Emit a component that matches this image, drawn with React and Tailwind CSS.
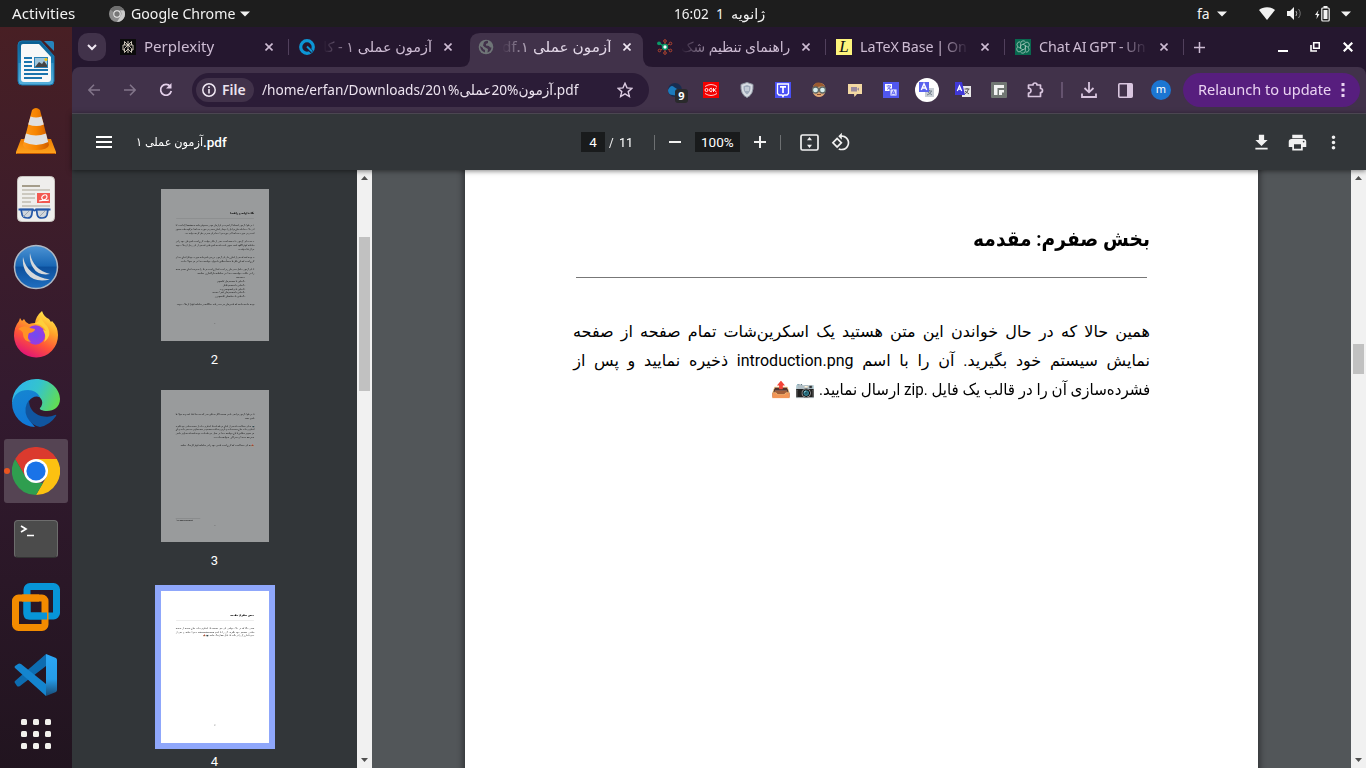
import React, { useLayoutEffect, useRef, useState } from "react";

/* Scales one line of text horizontally so that it fills its box. */
function Fit({ className = "", dir = "ltr", children }) {
  const box = useRef(null);
  const text = useRef(null);
  const [scale, setScale] = useState(1);
  useLayoutEffect(() => {
    const w = text.current.offsetWidth;
    if (w) setScale(box.current.clientWidth / w);
  }, []);
  return (
    <div ref={box} dir={dir} className={`shrink-0 whitespace-nowrap ${className}`}>
      <span
        ref={text}
        className={`inline-block ${dir === "rtl" ? "origin-right" : "origin-left"}`}
        style={{ transform: `scaleX(${scale})` }}
      >
        {children}
      </span>
    </div>
  );
}

const UI = "font-['Noto_Sans','DejaVu_Sans',sans-serif]";

function Caret() {
  return (
    <svg width="10" height="6" viewBox="0 0 10 6" className="shrink-0">
      <path d="M0 .5h10L5 5.5z" fill="#f2f2f2" />
    </svg>
  );
}

function TopBar() {
  return (
    <div className="flex h-[27px] shrink-0 items-center bg-[#1d1d1d] text-[14px] leading-[26px] text-[#f2f2f2]">
      <Fit className="ml-3 w-[63px]">Activities</Fit>
      <svg className="ml-[34px] shrink-0" width="16" height="16" viewBox="0 0 16 16">
        <circle cx="8" cy="8" r="8" fill="#8b8b8b" />
        <path d="M8 0a8 8 0 0 1 7 4H8a4 4 0 0 0-3.6 2.3L1.400 3.500A8 8 0 0 1 8 0z" fill="#6f6f6f" />
        <path d="M15.200 4.500A8 8 0 0 1 8 16l3.500-6A4 4 0 0 0 11 4.500z" fill="#c9c9c9" />
        <circle cx="8" cy="8" r="3.700" fill="#eee" />
        <circle cx="8" cy="8" r="2.700" fill="#777" />
      </svg>
      <Fit className="ml-[6px] w-[104px]">Google Chrome</Fit>
      <div className="ml-[5px] flex"><Caret /></div>
      <Fit className="ml-[424px] w-[35px]">16:02</Fit>
      <Fit className="ml-[7px] w-[8px]">1</Fit>
      <Fit dir="rtl" className="ml-[7px] w-[34px]">ژانویه</Fit>
      <Fit className="ml-[432px] w-[13px]">fa</Fit>
      <div className="ml-[7px] flex"><Caret /></div>
      <svg className="ml-[32px] shrink-0" width="16" height="13" viewBox="0 0 16 13">
        <path d="M0 3C4-.8 12-.8 16 3L8 13z" fill="#f2f2f2" />
      </svg>
      <svg className="ml-[12px] shrink-0" width="15" height="13" viewBox="0 0 15 13">
        <path d="M0 4h3l4-4v13L3 9H0z" fill="#f2f2f2" />
        <path d="M9 4q1.500 2.500 0 5" stroke="#aaa" fill="none" />
        <path d="M11.500 2q3.500 4.500 0 9" stroke="#777" fill="none" />
      </svg>
      <svg className="ml-[13px] shrink-0" width="15" height="16" viewBox="0 0 15 16">
        <path d="M3.500 4L0 9h2l-.5 4L4.500 8h-2z" fill="#f2f2f2" />
        <rect x="6.800" y="2" width="7.400" height="13" rx="1" fill="none" stroke="#f2f2f2" strokeWidth="1.200" />
        <path d="M8.500 0h4v2h-4zM8.500 4h4v9h-4z" fill="#f2f2f2" />
      </svg>
      <div className="ml-[11px] flex"><Caret /></div>
    </div>
  );
}

/* ---------- dock ---------- */
function WriterIcon() {
  return (
    <svg width="38" height="46" viewBox="0 0 38 46">
      <defs>
        <linearGradient id="wr" x2="0" y2="1"><stop stopColor="#0b5e91" /><stop offset=".5" stopColor="#1b7db4" /><stop offset=".51" stopColor="#3593c5" /><stop offset="1" stopColor="#56b0dc" /></linearGradient>
      </defs>
      <path d="M5 1h18.500L37 16v25a4 4 0 0 1-4 4H5a4 4 0 0 1-4-4V5a4 4 0 0 1 4-4z" fill="url(#wr)" stroke="#1777ae" />
      <path d="M6 4h16l12 13v22a3 3 0 0 1-3 3H7a3 3 0 0 1-3-3V6a2 2 0 0 1 2-2z" fill="#f8f8f8" />
      <path d="M27 1h8a2 2 0 0 1 2 2v8z" fill="#2684bc" />
      <path d="M7 18h8M7 22h8M7 26h8M7 30h24M7 34h24M7 38h18" stroke="#1b74ad" strokeWidth="1.800" />
      <path d="M17 17h14v11H17z" fill="#2982b7" /><path d="M18 18h12v9H18z" fill="#9fc6dc" />
      <path d="M18 27l4-5 3 2 2-3 3 4v2z" fill="#444" /><circle cx="29" cy="19.500" r="1.600" fill="#f1c40f" />
    </svg>
  );
}
function VlcIcon() {
  return (
    <svg width="42" height="48" viewBox="0 0 42 48">
      <defs>
        <linearGradient id="vb" x2="0" y2="1"><stop stopColor="#ef7d00" /><stop offset="1" stopColor="#ffa51f" /></linearGradient>
        <linearGradient id="vc"><stop stopColor="#ff9a1c" /><stop offset=".5" stopColor="#f78500" /><stop offset="1" stopColor="#cf5c00" /></linearGradient>
      </defs>
      <path d="M6 32h30l5 13q.5 2-1 2H2q-1.500 0-1-2z" fill="url(#vb)" />
      <path d="M17 3q4-4 8 0l9 35q-1 5-13 5T8 38z" fill="url(#vc)" />
      <path d="M15.500 9.500q5.500 2 11 0l2.300 8q-7 3-15.600 0zM11 26.500q10 4 20 0l2.200 8.500q-12 6-24.400 0z" fill="#e0e0e0" />
      <path d="M2 46.500h38" stroke="#c75b00" />
    </svg>
  );
}
function EvinceIcon() {
  return (
    <svg width="38" height="46" viewBox="0 0 38 46">
      <rect x=".5" y=".5" width="37" height="45" rx="4" fill="#efeeec" stroke="#c8c5c1" />
      <path d="M5 10h18" stroke="#a59d8b" strokeWidth="2" />
      <path d="M5 14h28M5 18h13M5 22h13M5 26h9M5 30h28" stroke="#ccc8bf" strokeWidth="1.800" />
      <path d="M20 17h13v10H20z" fill="#f25850" />
      <path d="M22 25q8-1 8-4t-3-2q-4 2-1 5 2 1 6 0" fill="none" stroke="#fff" strokeWidth="1.200" />
      <path d="M4 33.500h11.500l-.8 5.500q-.7 3-4 3-4.500 0-5.500-3zM19.500 33.500H31l-1 5.500q-1 3-5 3-4 0-4.700-3z" fill="#c9d0d8" fillOpacity=".8" stroke="#2557a7" strokeWidth="1.700" />
      <path d="M6 41l6-6M22 41l6-6" stroke="#9da7b3" />
      <path d="M1.500 33.500H16q1.500 2 3 0h14.500" stroke="#2557a7" strokeWidth="1.800" fill="none" />
    </svg>
  );
}
function WingsIcon() {
  return (
    <svg width="46" height="46" viewBox="0 0 46 46">
      <defs><linearGradient id="wg" x2="0" y2="1"><stop stopColor="#4d94d4" /><stop offset=".48" stopColor="#1866b4" /><stop offset=".5" stopColor="#0c4f9c" /><stop offset="1" stopColor="#1f6ec0" /></linearGradient></defs>
      <circle cx="23" cy="23" r="21.500" fill="url(#wg)" stroke="#aeb8c4" strokeWidth="1.500" />
      <path d="M10 13Q14 32 37 35.500 21 39 14 29.500 9 23 10 13zM17 9q3 17 20 21-12 2-17-6.500-4-6-3-14.500z" fill="#d5d8db" />
    </svg>
  );
}
function FirefoxIcon() {
  return (
    <svg width="48" height="48" viewBox="0 0 48 48">
      <defs>
        <linearGradient id="ff" x1=".8" y1="0" x2=".3" y2="1"><stop stopColor="#fff44f" /><stop offset=".35" stopColor="#ffa42a" /><stop offset=".65" stopColor="#ff5438" /><stop offset="1" stopColor="#e0117a" /></linearGradient>
        <radialGradient id="fp"><stop stopColor="#6d4cf2" /><stop offset="1" stopColor="#9a3be0" /></radialGradient>
      </defs>
      <path d="M10 10l2-2q1 3 5 5 3-1 6-1 1-7 7-12 2 6 7 8l2 3 1-1q6 6 6 14a22 22 0 0 1-44 1q0-9 5-15l1-3z" fill="url(#ff)" />
      <circle cx="23.500" cy="24" r="9.700" fill="url(#fp)" />
      <path d="M6 18q6-5 12-1l5 1q0 3-6 4-3 5 2 9-8-1-8-8 0-3-5-5z" fill="#ff9226" />
      <path d="M22 13q8-1 12 7l-3-1q4 6 1 12 9-7 3-16-5-5-6-9-2 5-7 7z" fill="#ffcf3a" />
    </svg>
  );
}
function EdgeIcon() {
  return (
    <svg width="48" height="48" viewBox="0 0 48 48">
      <defs>
        <linearGradient id="e1" x1="0" y1=".3" x2="1" y2=".6"><stop stopColor="#2eb4ee" /><stop offset=".5" stopColor="#35c4cc" /><stop offset="1" stopColor="#62dc53" /></linearGradient>
        <linearGradient id="e2" x2=".3" y2="1"><stop stopColor="#1686d0" /><stop offset="1" stopColor="#1078d8" /></linearGradient>
      </defs>
      <path d="M0 24A24 24 0 0 1 24 0c14 0 24 10 24 20 0 8-6 12-13 12-5 0-8-2-7-3 4-4 3-11-5-13Q9 10 0 24z" fill="url(#e1)" />
      <path d="M0 24Q3 11 16 11q8 0 12 7-7-2-11 4-6 13 6 26A24 24 0 0 1 0 24z" fill="url(#e2)" />
      <path d="M17 21q-6 8-2 17 4 8 13 10 10-2 16-11 1-2-1-1-6 3-14 1-12-4-12-16z" fill="#10559f" />
    </svg>
  );
}
function ChromeIcon({ size = 48 }) {
  return (
    <svg width={size} height={size} viewBox="0 0 48 48">
      <path d="M24 12h20.800A24 24 0 0 1 24 48l10.400-18z" fill="#fcc111" />
      <path d="M3.200 12A24 24 0 0 1 44.800 12H24L13.600 30z" fill="#db3a2e" />
      <path d="M3.200 12l10.400 18L24 36h7L24 48A24 24 0 0 1 3.200 12z" fill="#2f9e4f" />
      <circle cx="24" cy="24" r="12" fill="#fff" />
      <circle cx="24" cy="24" r="9.600" fill="#1a73e8" />
    </svg>
  );
}
function VmwareIcon() {
  return (
    <svg width="48" height="48" viewBox="0 0 48 48">
      <rect x="15" y="3.500" width="29.500" height="29.500" rx="3" fill="none" stroke="#0795d8" strokeWidth="7" />
      <rect x="3.500" y="15" width="29.500" height="29.500" rx="3" fill="none" stroke="#f38b00" strokeWidth="7" />
      <path d="M15 19v12q0 2 2 2h18" fill="none" stroke="#0795d8" strokeWidth="7" />
      <path d="M10 15h17M3.500 18v13" fill="none" stroke="#f38b00" strokeWidth="7" />
    </svg>
  );
}
function CodeIcon() {
  return (
    <svg width="44" height="44" viewBox="0 0 44 44">
      <defs><linearGradient id="vs" x2="0" y2="1"><stop stopColor="#2ba7f5" /><stop offset=".6" stopColor="#269ce8" /><stop offset="1" stopColor="#174a75" /></linearGradient></defs>
      <path d="M32 1v12L6 33q-2 1-3 0l-2-3q-1-1 0-2z" fill="#0d6cb0" />
      <path d="M1 15q-1-1 0-2l3-2q1-1 3 0l25 20v12z" fill="#1485cf" />
      <path d="M32 1l10 4q1 1 1 2v30q0 1-1 2l-10 4z" fill="url(#vs)" />
    </svg>
  );
}
function Cell({ children }) {
  return <div className="flex h-[68px] w-[72px] shrink-0 items-center justify-center">{children}</div>;
}
function Dock() {
  return (
    <div className="flex w-[72px] shrink-0 flex-col bg-gradient-to-b from-[#481f24] via-[#331a2f] to-[#21141f] pt-[2px]">
      <Cell><WriterIcon /></Cell>
      <Cell><VlcIcon /></Cell>
      <Cell><EvinceIcon /></Cell>
      <Cell><WingsIcon /></Cell>
      <Cell><FirefoxIcon /></Cell>
      <Cell><EdgeIcon /></Cell>
      <Cell>
        <div className="relative flex h-16 w-16 items-center justify-center rounded-[3px] bg-[#554453]">
          <ChromeIcon />
          <div className="absolute top-[29px] left-0 h-[6px] w-[6px] rounded-full bg-[#e95420]" />
        </div>
      </Cell>
      <Cell>
        <div className="flex h-[38px] w-[44px] rounded-[4px] border border-[#6d6d6d] border-b-[#333] bg-[#4b4b4b] pt-[4px] pl-[5px]">
          <svg width="16" height="13" viewBox="0 0 16 13"><path d="M1 1l5 3-5 3M7 10.500h7" stroke="#fff" strokeWidth="1.700" fill="none" /></svg>
        </div>
      </Cell>
      <Cell><VmwareIcon /></Cell>
      <Cell><CodeIcon /></Cell>
      <div className="mt-[10px] ml-[21px] grid w-[30px] grid-cols-3 gap-[6px]">
        {[0, 1, 2, 3, 4, 5, 6, 7, 8].map((i) => (
          <div key={i} className="h-[6px] w-[6px] rounded-[1.500px] bg-[#f2f0ec]" />
        ))}
      </div>
    </div>
  );
}

/* ---------- tab strip ---------- */
function CloseX({ color = "#cdbcd3" }) {
  return (
    <svg width="8" height="8" viewBox="0 0 8 8" className="shrink-0">
      <path d="M.5.500l7 7M7.500.500l-7 7" stroke={color} strokeWidth="1.600" />
    </svg>
  );
}
const favicons = {
  perplexity: (
    <svg width="16" height="16" viewBox="0 0 16 16"><path d="M0 0h16v16H0z" fill="#0b0b0b" /><path d="M8 2v12M4.500 2.500L8 6l3.500-3.500V6M4.500 2.500V6M3 6h10v5h-1.500M3 6v5h1.500M8 6l-3.500 3.500v4L8 10l3.500 3.500v-4z" fill="none" stroke="#ddd5c5" strokeWidth=".9" /></svg>
  ),
  quera: (
    <svg width="16" height="16" viewBox="0 0 16 16"><circle cx="8" cy="8" r="6.300" fill="none" stroke="#0c96d6" strokeWidth="3.200" /><path d="M8 8l5 5" stroke="#25172f" strokeWidth="3.600" /><path d="M8 7.500l5 5" stroke="#0c96d6" strokeWidth="2" /></svg>
  ),
  globe: (
    <svg width="16" height="16" viewBox="0 0 16 16"><circle cx="8" cy="8" r="7.300" fill="#6f7577" /><path d="M2 7l3 2v1l2 1v2.500Q2.500 12 2 7zM6 3q3-2 4-1v2L8 5v1.500l3 .5q1 2 2.500 1.500-.5 4-4 5L10 10 6.500 8 5 6.500z" fill="#41324a" /></svg>
  ),
  net: (
    <svg width="16" height="16" viewBox="0 0 16 16"><path d="M8 8V2M8 8v6M8 8l5-3.500M8 8l5 3.500M8 8l-5 3.500" stroke="#b4452f" /><path d="M2 4l6 4" stroke="#0a9a68" strokeWidth="1.500" /><g fill="#25172f" stroke="#b4452f"><circle cx="8" cy="2" r="1.300" /><circle cx="8" cy="14" r="1.300" /><circle cx="13.500" cy="4.500" r="1.300" /><circle cx="13.500" cy="11.500" r="1.300" /><circle cx="2.500" cy="11.500" r="1.300" /></g><circle cx="2" cy="4.300" r="1.900" fill="#0a9a68" /><circle cx="8" cy="8" r="2.400" fill="#fff" stroke="#0a9a68" strokeWidth="1.500" /></svg>
  ),
  latex: (
    <div className="flex h-4 w-4 items-center justify-center bg-[#fdf47c] font-['Liberation_Serif',serif] text-[17px] leading-4 text-[#111] italic">L</div>
  ),
  gpt: (
    <svg width="16" height="16" viewBox="0 0 16 16"><path d="M0 0h16v16H0z" fill="#08694f" /><g fill="none" stroke="#a8c9bd" strokeWidth=".8"><path d="M8 5.200L5.600 6.600v2.800L8 10.800l2.400-1.400V6.600z" /><path d="M5.600 9.400V4.200Q6 2 8 1.800q1.500 0 2.400 1M8 5.200l4-2.200q2.500.5 2.300 3.200-.2 1-1 1.800M10.400 6.600l3.200 2q1.300 2.500-.8 4.200l-2 .4M10.400 6.600v5.200Q10 14 8 14.200q-1.500 0-2.400-1M8 10.800L4 13q-2.500-.5-2.300-3.200.2-1 1-1.800M5.600 9.400l-3.200-2Q1.100 5 3.200 3.200l2-.4" /></g></svg>
  ),
};
function Tab({ icon, children, active, sep }) {
  return (
    <div className="relative flex h-[34px] w-[179px] shrink-0">
      {active && (
        <svg className="absolute top-0 left-[-8px]" width="195" height="34" viewBox="0 0 195 34">
          <path d="M0 34q10 0 10-10V10Q10 0 20 0h153q10 0 10 10v14q0 10 10 10z" fill="#41324a" />
        </svg>
      )}
      <div className="relative flex h-[28px] w-full items-center pl-[10px]">
        <div className="flex h-4 w-4 shrink-0">{favicons[icon]}</div>
        <div className={`ml-2 flex w-[109px] shrink-0 text-[14px] leading-[26px] ${active ? "text-[#e3d8e8]" : "text-[#cdbcd3]"}`}>{children}</div>
        <div className="ml-[12px] flex"><CloseX color={active ? "#f0e8f3" : "#cdbcd3"} /></div>
      </div>
      {sep && <div className="absolute top-[6px] right-0 h-4 w-px bg-[#51405c]" />}
    </div>
  );
}
const fadeR = "w-[109px] [mask-image:linear-gradient(to_right,black_72%,transparent)]";
const fadeL = "w-[109px] [mask-image:linear-gradient(to_left,black_68%,transparent)]";

function TabStrip() {
  return (
    <div className="flex h-[40px] shrink-0 bg-[#25172f] pt-[6px] pl-[6px]">
      <div className="mr-1 flex h-7 w-7 items-center justify-center rounded-[10px] bg-[#41324a]">
        <svg width="10" height="7" viewBox="0 0 10 7"><path d="M1 1l4 4 4-4" stroke="#f0e8f3" strokeWidth="2" fill="none" /></svg>
      </div>
      <Tab icon="perplexity" sep><Fit className="w-[70px]">Perplexity</Fit></Tab>
      <Tab icon="quera">
        <div className={fadeL}><Fit dir="rtl" className="w-[109px]">آزمون عملی ۱ - کا</Fit></div>
      </Tab>
      <Tab icon="globe" active>
        <div className={fadeL}><Fit dir="rtl" className="w-[109px]">آزمون عملی ۱.<bdi>df</bdi></Fit></div>
      </Tab>
      <Tab icon="net" sep>
        <div className={fadeL}><Fit dir="rtl" className="w-[109px]">راهنمای تنظیم شک</Fit></div>
      </Tab>
      <Tab icon="latex" sep><div className={fadeR}><Fit className="w-[107px] [word-spacing:-1px]">LaTeX Base | On</Fit></div></Tab>
      <Tab icon="gpt" sep><div className={fadeR}><Fit className="w-[107px] [word-spacing:-1px]">Chat AI GPT - Un</Fit></div></Tab>
      <div className="flex h-[28px] items-center pl-[10px]">
        <svg width="11" height="11" viewBox="0 0 11 11"><path d="M5.500 0v11M0 5.500h11" stroke="#cdbcd3" strokeWidth="1.500" /></svg>
        <svg className="ml-[73px]" width="10" height="10" viewBox="0 0 10 10"><path d="M0 9h10" stroke="#fff" strokeWidth="2" /></svg>
        <svg className="ml-[22px]" width="10" height="10" viewBox="0 0 10 10"><path d="M3.700.700h5.600v5.600H3.700zM1 3v6h6" stroke="#fff" strokeWidth="1.600" fill="none" /></svg>
        <svg className="ml-[23px]" width="10" height="10" viewBox="0 0 10 10"><path d="M.7.700l8.600 8.600M9.300.700L.7 9.300" stroke="#fff" strokeWidth="2.200" /></svg>
      </div>
    </div>
  );
}

/* ---------- browser toolbar ---------- */
function Slot({ children }) {
  return <div className="flex h-[46px] w-9 shrink-0 items-center justify-center">{children}</div>;
}
function Toolbar() {
  return (
    <div className="bg-[#25172f]">
    <div className="flex h-[46px] shrink-0 items-center rounded-t-[8px] bg-[#41324a] pl-1">
      <Slot><svg width="12" height="12" viewBox="0 0 12 12"><path d="M12 6H1M6 .800L.9 6 6 11.200" stroke="#82758a" strokeWidth="1.500" fill="none" /></svg></Slot>
      <Slot><svg width="12" height="12" viewBox="0 0 12 12"><path d="M0 6h11M6 .800L11.100 6 6 11.200" stroke="#82758a" strokeWidth="1.500" fill="none" /></svg></Slot>
      <Slot><svg width="14" height="14" viewBox="0 0 14 14"><path d="M11.300 3.500A5.400 5.400 0 1 0 12.300 8" stroke="#e3cfe9" strokeWidth="1.700" fill="none" /><path d="M12.500 0v5.500H7z" fill="#e3cfe9" /></svg></Slot>
      <div className="ml-2 flex h-[34px] w-[457px] shrink-0 items-center rounded-full bg-[#2b1c37] pl-1 text-[14px] leading-6 text-[#ece3ef]">
        <div className="flex h-6 w-[58px] items-center rounded-full bg-[#41324a] pl-[6px]">
          <svg width="14" height="14" viewBox="0 0 14 14"><circle cx="7" cy="7" r="6.200" fill="none" stroke="#f0e8f3" strokeWidth="1.500" /><path d="M6.200 6h1.600v4.500H6.200zM6.200 3.300h1.600v1.600H6.200z" fill="#f0e8f3" /></svg>
          <Fit className="ml-[6px] w-[24px] font-semibold">File</Fit>
        </div>
        <Fit className="ml-2 w-[316px]">/home/erfan/Downloads/آزمون%20عملی%20۱.pdf</Fit>
        <svg className="ml-[39px]" width="16" height="16" viewBox="0 0 16 16"><path d="M8 1.300l2 4.600 5 .4-3.800 3.300 1.200 4.900L8 11.900l-4.400 2.600 1.200-4.900L1 6.300l5-.4z" stroke="#ddcde3" strokeWidth="1.400" fill="none" /></svg>
      </div>
      <div className="ml-2 flex">
        <Slot>
          <div className="relative flex h-4 w-4">
            <svg width="16" height="16" viewBox="0 0 16 16"><circle cx="8" cy="8" r="7" fill="#182d50" /><path d="M1 8q3-6 6-3l3 2q4 0 4 3-3 4-8 3-5 0-5-5z" fill="#1b7bbd" /></svg>
            <div className="absolute top-[7px] left-[8px] flex h-[14px] w-[13px] items-center justify-center rounded-[3px] bg-[#2a2a2c] text-[11px] leading-[14px] font-bold text-white">9</div>
          </div>
        </Slot>
        <Slot><svg width="16" height="16" viewBox="0 0 16 16"><path d="M0 0h16v16H0z" fill="#f40000" /><path d="M2 4.500q6-4 12 0M2 11.500q6 4 12 0" stroke="#fff" strokeWidth=".8" fill="none" /><circle cx="3.500" cy="8" r="1.500" fill="none" stroke="#fff" strokeWidth=".9" /><path d="M9 6.300q-2.500-.5-2.500 1.700T9 9.700M8 8h2.500M10.500 6v4M13.500 6l-2.500 2 2.500 2" stroke="#fff" strokeWidth=".9" fill="none" /></svg></Slot>
        <Slot><svg width="14" height="16" viewBox="0 0 14 16"><path d="M7 .500l6 2q.8 10-6 13Q.2 12.500 1 2.500z" fill="#d8dce3" stroke="#9098a5" /><path d="M7 3l3.500 1.200Q11 10 7 12.500 3 10 3.500 4.200z" fill="#9faabb" /><path d="M5 6h4M5 8h4" stroke="#e9edf2" /></svg></Slot>
        <Slot><svg width="16" height="16" viewBox="0 0 16 16"><path d="M0 0h16v16H0z" fill="#4a50f5" /><path d="M2.500 2h11v9.500l-1.500 1.500H9l-1 1.700L7 13H4l-1.500-1.500z" fill="none" stroke="#fff" strokeWidth="1.300" /><path d="M5 4.900h6M8 5v6" stroke="#fff" strokeWidth="1.700" /></svg></Slot>
        <Slot><svg width="16" height="16" viewBox="0 0 16 16"><path d="M2 6q0-5 6-5t6 5v5q-2 4-6 4t-6-4z" fill="#e2aa78" /><path d="M1.500 6Q3 0 8 .500t6.500 5.500L12 4z" fill="#9a5b31" /><circle cx="4.500" cy="8" r="3" fill="#d5eeee" stroke="#5f6967" strokeWidth="1.300" /><circle cx="11.500" cy="8" r="3" fill="#d5eeee" stroke="#5f6967" strokeWidth="1.300" /><path d="M6 12.500h4" stroke="#8c4d2d" /></svg></Slot>
        <Slot><svg width="14" height="14" viewBox="0 0 14 14"><path d="M0 1h14v10H9l-2.500 3-.5-3H0z" fill="#f3d9a3" /><path d="M3 4h6v4.500H3zM9 6l2-1.500V8z" fill="#9a8aa0" /></svg></Slot>
        <Slot><svg width="16" height="16" viewBox="0 0 16 16"><path d="M0 0h16v16H0z" fill="#5057ee" /><path d="M2 2h7v7H2z" fill="#fff" /><path d="M7 7h7v7H7z" fill="#dfe1ff" stroke="#5057ee" strokeWidth=".8" /><path d="M3.500 4H8M5.800 3v1M4 7.500Q7 6.500 7.500 4M4.500 5l3 2.500" stroke="#5057ee" strokeWidth=".8" fill="none" /><path d="M8.800 12.500l1.700-4 1.700 4M9.500 11.300h2" stroke="#5057ee" strokeWidth=".9" fill="none" /></svg></Slot>
        <Slot><div className="flex h-6 w-6 items-center justify-center rounded-full bg-white"><svg width="16" height="16" viewBox="0 0 16 16"><path d="M6 6h9v9H6z" fill="#c9cfd6" /><path d="M8 9h5M10.500 8v1M8 13q4-1 4.500-4M9 10l4 3" stroke="#6c7a88" strokeWidth=".9" fill="none" /><path d="M0 0h10v10H0z" fill="#5a63ee" /><path d="M2.300 8L5 1.800 7.700 8M3.200 6h3.600" stroke="#fff" strokeWidth="1.400" fill="none" /></svg></div></Slot>
        <Slot><svg width="16" height="16" viewBox="0 0 16 16"><path d="M7 4h9v11H7z" fill="#e9e9e9" /><path d="M9.500 7h5M12 6v1M9.500 12q3-1 4-5M10 9l4 3" stroke="#555" strokeWidth="1" fill="none" /><path d="M0 0h7l3 13H0z" fill="#4038d8" /><path d="M2.300 9L4.500 3.800 6.700 9M3 7.200h3" stroke="#fff" strokeWidth="1.200" fill="none" /></svg></Slot>
        <Slot><svg width="16" height="16" viewBox="0 0 16 16"><rect width="16" height="16" rx="1" fill="#717773" /><path d="M3 13V3h10v3H6.500v7zM8 13V8h5v2.500h-2V13z" fill="#f2f2f2" /></svg></Slot>
        <Slot><svg width="17" height="16" viewBox="0 0 17 16"><path d="M1.500 3H6a2 2 0 0 1 4 0h3.500v3.500a2 2 0 0 1 0 4V14.500h-12v-3.300a2.500 2.500 0 0 0 0-5z" stroke="#d9c6df" strokeWidth="1.700" strokeLinejoin="round" fill="none" /></svg></Slot>
        <div className="flex w-[18px] items-center justify-center"><div className="h-4 w-[1.500px] bg-[#65536f]" /></div>
        <Slot><svg width="16" height="16" viewBox="0 0 16 16"><path d="M8 0v10M3.500 6L8 10.300 12.500 6M1 11.500V15h14v-3.500" stroke="#d9c6df" strokeWidth="1.800" fill="none" /></svg></Slot>
        <Slot><svg width="15" height="15" viewBox="0 0 15 15"><rect x=".8" y=".8" width="13.400" height="13.400" rx="1" stroke="#d9c6df" strokeWidth="1.600" fill="none" /><path d="M9 1h5v13H9z" fill="#d9c6df" /></svg></Slot>
        <Slot><div className="flex h-5 w-5 items-center justify-center rounded-full bg-[#1c76d2] pb-[2px] text-[11px] leading-5 text-white">m</div></Slot>
      </div>
      <div className="ml-[4px] flex h-[34px] w-[177px] items-center rounded-full bg-[#571e7e] pl-[15px] text-[14px] leading-7 text-[#ead3f2]">
        <Fit className="w-[133px]">Relaunch to update</Fit>
        <svg className="ml-[10px]" width="4" height="14" viewBox="0 0 4 14"><path d="M.5 0h3v3h-3zM.5 5.500h3v3h-3zM.5 11h3v3h-3z" fill="#ead3f2" /></svg>
      </div>
    </div>
    </div>
  );
}

/* ---------- PDF viewer ---------- */
function Mat({ size, d }) {
  return <svg className="shrink-0" width={size} height={size} viewBox="0 0 24 24"><path d={d} fill="#f1f1f1" /></svg>;
}
function PdfBar() {
  return (
    <div className="relative z-10 flex h-[57px] shrink-0 items-center border-t border-[#4b4651] bg-[#323639] pl-6 font-['Roboto','DejaVu_Sans',sans-serif] text-[13.500px] leading-5 text-white shadow-[0_1px_5px_rgba(0,0,0,0.5)]">
      <svg className="shrink-0" width="16" height="12" viewBox="0 0 16 12"><path d="M0 0h16v2H0zM0 5h16v2H0zM0 10h16v2H0z" fill="#fff" /></svg>
      <div className="ml-6 flex w-[92px] items-center" dir="ltr">
        <Fit dir="rtl" className="w-[67px] text-[12px]">آزمون عملی ۱</Fit>
        <Fit className="w-[24px] font-medium">.pdf</Fit>
      </div>
      <div className="ml-[353px] flex h-5 w-6 items-center justify-center bg-[#191b1c]">4</div>
      <Fit className="ml-1 w-[5px]">/</Fit>
      <Fit className="ml-[5px] w-[14px]">11</Fit>
      <div className="ml-[21px] h-[15px] w-px bg-[#6d7072]" />
      <div className="ml-[14px] h-[2px] w-3 bg-[#f1f1f1]" />
      <div className="ml-[14px] flex h-5 w-[45px] items-center justify-center bg-[#191b1c]"><Fit className="w-[33px]">100%</Fit></div>
      <svg className="ml-[14px] shrink-0" width="12" height="12" viewBox="0 0 12 12"><path d="M5 0h2v5h5v2H7v5H5V7H0V5h5z" fill="#f1f1f1" /></svg>
      <div className="ml-[14px] h-[15px] w-px bg-[#6d7072]" />
      <svg className="ml-[19px] shrink-0" width="19" height="17" viewBox="0 0 19 17"><rect x="1" y="1" width="17" height="15" rx="1.500" stroke="#f1f1f1" strokeWidth="1.700" fill="none" /><path d="M9.500 3l2.500 3.200H7zM9.500 14L7 10.800h5z" fill="#f1f1f1" /></svg>
      <div className="ml-[12px] -mt-[1px] flex"><Mat size={20} d="M7.340 6.410L.86 12.900l6.490 6.480 6.490-6.480-6.500-6.490zM3.690 12.900l3.660-3.660L11 12.900l-3.660 3.660-3.650-3.660zm15.670-6.260C17.610 4.880 15.300 4 13 4V.760L8.760 5 13 9.240V6c1.790 0 3.580.680 4.950 2.050 2.730 2.730 2.730 7.170 0 9.900C16.580 19.320 14.790 20 13 20c-.970 0-1.940-.210-2.840-.610l-1.490 1.490C10.020 21.620 11.510 22 13 22c2.300 0 4.610-.880 6.360-2.640 3.520-3.510 3.520-9.210 0-12.720z" /></div>
      <div className="ml-[400px] flex"><Mat size={21} d="M5 20h14v-2H5v2zM19 9h-4V3H9v6H5l7 7 7-7z" /></div>
      <div className="ml-[15px] flex"><Mat size={21} d="M19 8H5c-1.660 0-3 1.340-3 3v6h4v4h12v-4h4v-6c0-1.660-1.340-3-3-3zm-3 11H8v-5h8v5zm3-7c-.550 0-1-.450-1-1s.450-1 1-1 1 .450 1 1-.450 1-1 1zm-1-9H6v4h12V3z" /></div>
      <div className="ml-[15px] flex"><Mat size={21} d="M12 8c1.100 0 2-.9 2-2s-.9-2-2-2-2 .9-2 2 .9 2 2 2zm0 2c-1.100 0-2 .9-2 2s.9 2 2 2 2-.9 2-2-.9-2-2-2zm0 6c-1.100 0-2 .9-2 2s.9 2 2 2 2-.9 2-2-.9-2-2-2z" /></div>
    </div>
  );
}

const PG = "flex h-[1122px] w-[793px] shrink-0 flex-col items-end pr-[108px] pt-[161px] font-['Roboto','DejaVu_Sans',sans-serif] text-[16px] leading-[29px] text-black";
const L = "h-[29px] w-[577px]";

function IntroPage() {
  return (
    <div className={`${PG} bg-white`}>
      <Fit dir="rtl" className="h-[34px] w-[177px] text-[21px] leading-[34px] font-bold">بخش صفرم: مقدمه</Fit>
      <div className="mt-[21px] mr-[3px] h-px w-[571px] shrink-0 bg-[#777]" />
      <div dir="rtl" className="mt-[39px] flex w-[577px] shrink-0 justify-between">
        {["همین", "حالا", "که", "در", "حال", "خواندن", "این", "متن", "هستید", "یک", "اسکرین‌شات", "تمام", "صفحه", "از", "صفحه"].map((w, i) => <span key={i}>{w}</span>)}
      </div>
      <div dir="rtl" className="flex w-[577px] shrink-0 justify-between">
        {["نمایش", "سیستم", "خود", "بگیرید.", "آن", "را", "با", "اسم", "introduction.png", "ذخیره", "نمایید", "و", "پس", "از"].map((w, i) => <span key={i}>{w}</span>)}
      </div>
      <div dir="rtl" className="flex w-[577px] shrink-0">
        <Fit dir="rtl" className="w-[331px]">فشرده‌سازی آن را در قالب یک فایل <span dir="ltr">zip.</span> ارسال نمایید.</Fit>
        <span className="mr-[4px]">📷</span>
        <span className="mr-[4px]">📤</span>
      </div>
      <div className="mt-[630px] mr-[284px] text-[14px]">۴</div>
    </div>
  );
}

function NotesPage() {
  return (
    <div className={`${PG} bg-[#999b9c]`}>
      <Fit dir="rtl" className="h-[34px] w-[177px] text-[21px] leading-[34px] font-bold">نکات اولیه و راهنما</Fit>
      <div className="mt-[21px] mr-[3px] mb-[37px] h-px w-[570px] shrink-0 bg-[#444]" />
      <Fit dir="rtl" className={L}>۱. در طول آزمون استفاده از اینترنت و ابزارهای هوش مصنوعی مانند ChatGPT آزاد است؛ با</Fit>
      <Fit dir="rtl" className={L}>این حال شما باید تمام مراحل را خودتان انجام دهید و در صورت مشاهده هرگونه تقلب ممنوع</Fit>
      <Fit dir="rtl" className="h-[29px] w-[510px]">است و در صورت مشاهده این مورد نمره شما برابر صفر در نظر گرفته خواهد شد.</Fit>
      <Fit dir="rtl" className={`${L} mt-[29px]`}>۲. مدت این آزمون ۹۰ دقیقه است. پیش از پایان مهلت، لازم است پاسخ‌های خود را در</Fit>
      <Fit dir="rtl" className={L}>سامانه کوئرا آپلود کنید. بدیهی است که به پاسخ‌هایی که پس از این زمان ارسال شوند</Fit>
      <Fit dir="rtl" className="h-[29px] w-[120px]">نمره‌ای داده نخواهد شد.</Fit>
      <Fit dir="rtl" className={`${L} mt-[29px]`}>۳. توجه کنید که پس از اتمام زمان این آزمون، بررسی پاسخ‌ها به صورت خودکار انجام شده و</Fit>
      <Fit dir="rtl" className="h-[29px] w-[540px]">لازم است که نام فایل‌ها دقیقاً مطابق با موارد خواسته شده در هر سوال باشد.</Fit>
      <Fit dir="rtl" className={`${L} mt-[29px]`}>۴. این آزمون شامل بخش‌های زیر است که لازم است هر یک را به ترتیب انجام دهید و نتیجه</Fit>
      <Fit dir="rtl" className="h-[29px] w-[420px]">را در قالب خواسته شده در سامانه بارگذاری نمایید:</Fit>
      <Fit dir="rtl" className="mr-[66px] h-[29px] w-[66px]">• مقدمه</Fit>
      <Fit dir="rtl" className="mr-[66px] h-[29px] w-[208px]">• آشنایی با سیستم‌های کامپیوتر</Fit>
      <Fit dir="rtl" className="mr-[66px] h-[29px] w-[165px]">• آشنایی با سیستم‌عامل</Fit>
      <Fit dir="rtl" className="mr-[66px] h-[29px] w-[188px]">• آشنایی با برنامه‌نویسی وب</Fit>
      <Fit dir="rtl" className="mr-[66px] h-[29px] w-[240px]">• آشنایی با سیستم‌های کنترل نسخه</Fit>
      <Fit dir="rtl" className="mr-[66px] h-[29px] w-[224px]">• آشنایی با شبکه‌های کامپیوتری</Fit>
      <Fit dir="rtl" className="mt-[29px] h-[29px] w-[570px]">توجه داشته باشید که پاسخ‌های هر بخش باید جداگانه در سامانه کوئرا ارسال شوند.</Fit>
      <div className="mt-[108px] mr-[284px] text-[14px]">۲</div>
    </div>
  );
}

function RulesPage() {
  return (
    <div className={`${PG} bg-[#999b9c]`}>
      <Fit dir="rtl" className={L}>۵. در طول آزمون مراقبین حاضر هستند تا اگر مشکلی پیش آمد به شما کمک کنند و به سوال‌ها</Fit>
      <Fit dir="rtl" className="h-[29px] w-[70px]">پاسخ دهند.</Fit>
      <Fit dir="rtl" className={`${L} mt-[29px]`}>📷 به این معنا است که پس از انجام مرحله باید یک اسکرین‌شات از صفحه نمایش خود بگیرید</Fit>
      <Fit dir="rtl" className={L}>اسکرین‌شات تمام صفحه باشد و تاریخ و ساعت سیستم در همه تصاویر مشخص باشد و نام</Fit>
      <Fit dir="rtl" className={L}>هر تصویر مطابق با نام خواسته شده در همان مرحله باشد. توجه کنید که تصاویر ناقص</Fit>
      <Fit dir="rtl" className="h-[29px] w-[300px]">پذیرفته نشده و نمره‌ای نخواهند داشت.</Fit>
      <Fit dir="rtl" className="mt-[29px] h-[29px] w-[545px]">📤 به این معنا است که لازم است پاسخ خود را در سامانه کوئرا ارسال نمایید.</Fit>
      <div className="mt-[518px] mr-[397px] h-px w-[180px] shrink-0 bg-[#333]" />
      <Fit className="mr-[452px] h-[26px] w-[125px] text-[12px]">¹ Full page screenshot</Fit>
      <div className="mt-[14px] mr-[284px] text-[14px]">۳</div>
    </div>
  );
}

function Thumb({ children }) {
  return (
    <div className="h-[152px] w-[108px] shrink-0 overflow-hidden">
      <div className="h-[1122px] w-[793px] origin-top-left scale-[0.1362]">{children}</div>
    </div>
  );
}

function Scrollbar({ className = "", thumb }) {
  return (
    <div className={`flex w-[15px] shrink-0 flex-col items-center bg-[#f1f1f1] ${className}`}>
      <svg className="mt-[6px] shrink-0" width="7" height="4" viewBox="0 0 7 4"><path d="M3.500 0L7 4H0z" fill="#505050" /></svg>
      <div className={`w-[11px] shrink-0 bg-[#c1c1c1] ${thumb}`} />
      <svg className="mt-auto mb-[6px] shrink-0" width="7" height="4" viewBox="0 0 7 4"><path d="M3.500 4L7 0H0z" fill="#505050" /></svg>
    </div>
  );
}

function Viewer() {
  return (
    <div className="flex min-h-0 flex-1">
      <div className="flex w-[285px] shrink-0 flex-col items-center overflow-hidden bg-[#323639] pt-[19px] font-['Roboto',sans-serif] text-[13px] leading-[18px] text-white">
        <Thumb><NotesPage /></Thumb>
        <div className="mt-[10px]">2</div>
        <div className="mt-[21px]"><Thumb><RulesPage /></Thumb></div>
        <div className="mt-[10px]">3</div>
        <div className="mt-[15px] flex h-[164px] w-[120px] shrink-0 justify-center bg-[#8fa7fb] pt-[6px]"><Thumb><IntroPage /></Thumb></div>
        <div className="mt-[4px]">4</div>
      </div>
      <Scrollbar thumb="mt-[57px] h-[154px]" />
      <div className="flex flex-1 overflow-hidden bg-[#525659] pl-[93px]">
        <div className="-mt-[109px] h-[1122px] shadow-[0_0_6px_2px_rgba(0,0,0,0.4)]"><IntroPage /></div>
      </div>
      <Scrollbar thumb="mt-[164px] h-[30px]" />
    </div>
  );
}

export default function App() {
  return (
    <div className={`flex h-[768px] w-[1366px] flex-col overflow-hidden bg-black ${UI}`}>
      <TopBar />
      <div className="flex min-h-0 flex-1">
        <Dock />
        <div className="flex min-w-0 flex-1 flex-col">
          <TabStrip />
          <Toolbar />
          <PdfBar />
          <Viewer />
        </div>
      </div>
    </div>
  );
}
